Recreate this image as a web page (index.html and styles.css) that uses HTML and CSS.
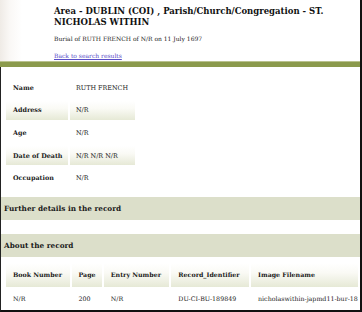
FILE: index.html
```html
<!DOCTYPE html>
<html>
<head>
<meta charset="utf-8">
<link rel="stylesheet" href="styles.css">
</head>
<body>
<div class="page">
  <header class="head">
    <h1 class="title">Area - DUBLIN (COI) , Parish/Church/Congregation - ST. NICHOLAS WITHIN</h1>
    <p class="sub">Burial of RUTH FRENCH of N/R on 11 July 1697</p>
    <a class="back" href="#">Back to search results</a>
  </header>
  <div class="bar"></div>
  <main class="content">
    <table class="details">
      <tr><th>Name</th><td>RUTH FRENCH</td></tr>
      <tr class="alt"><th>Address</th><td>N/R</td></tr>
      <tr><th>Age</th><td>N/R</td></tr>
      <tr class="alt"><th>Date of Death</th><td>N/R N/R N/R</td></tr>
      <tr><th>Occupation</th><td>N/R</td></tr>
    </table>
    <h2 class="band band-first">Further details in the record</h2>
    <h2 class="band band-second">About the record</h2>
    <table class="record">
      <tr class="rhead">
        <th class="c1">Book Number</th>
        <th class="c2">Page</th>
        <th class="c3">Entry Number</th>
        <th class="c4">Record_Identifier</th>
        <th class="c5">Image Filename</th>
      </tr>
      <tr>
        <td>N/R</td>
        <td>200</td>
        <td>N/R</td>
        <td>DU-CI-BU-189849</td>
        <td>nicholaswithin-japmd11-bur-18</td>
      </tr>
    </table>
  </main>
</div>
</body>
</html>
```

FILE: styles.css
```css
html, body {
  margin: 0;
  padding: 0;
  background: #fff;
}
body {
  font-family: "DejaVu Serif", "Liberation Serif", serif;
  color: #222;
  width: 362px;
  height: 312px;
  overflow: hidden;
}
.page {
  width: 362px;
  height: 312px;
  box-sizing: border-box;
  border-right: 2px solid #111;
  display: flex;
  flex-direction: column;
}
.head {
  height: 61px;
  box-sizing: border-box;
  padding: 6px 0 0 54px;
  background: linear-gradient(to right, #efebe6 0px, #faf8f6 10px, #fff 22px);
}
.title {
  margin: 0;
  font-size: 8.5px;
  line-height: 11px;
  font-weight: bold;
  color: #111;
  width: 290px;
}
.sub {
  margin: 6px 0 0;
  font-size: 6px;
  line-height: 9px;
  color: #222;
}
.back {
  display: inline-block;
  margin-top: 4px;
  font-size: 6px;
  line-height: 8px;
  color: #5a4ec8;
  text-decoration: underline;
}
.bar {
  height: 5px;
  background: #8b9a4c;
  border-top: 1px solid #b9c28e;
}
.content {
  flex: 1;
  border-left: 1px solid #222;
  border-bottom: 2px solid #111;
  display: flex;
  flex-direction: column;
  align-items: flex-start;
}
.details {
  margin: 8px 0 0 3px;
  border-collapse: separate;
  border-spacing: 2px 3px;
}
.details th,
.details td {
  height: 19.6px;
  padding: 0;
  font-size: 6.4px;
  text-align: left;
  vertical-align: middle;
  white-space: nowrap;
}
.details th {
  width: 55px;
  padding-left: 7px;
  font-weight: bold;
  color: #1a1a1a;
}
.details td {
  width: 59px;
  padding-left: 6px;
  color: #222;
}
.details .alt th,
.details .alt td,
.record .rhead th {
  background: linear-gradient(to bottom, #fff 0%, #fafaf5 40%, #e6e9d6 100%);
}
.band {
  align-self: stretch;
  margin: 0;
  height: 23px;
  line-height: 23px;
  padding-left: 3px;
  background: #dcdfca;
  font-size: 7.3px;
  font-weight: bold;
  color: #1a1a1a;
}
.band-first {
  margin-top: 6px;
}
.band-second {
  margin-top: 14px;
}
.record {
  margin: 4px 0 0 3px;
  border-collapse: separate;
  border-spacing: 2px;
  table-layout: fixed;
  width: 356px;
}
.record th,
.record td {
  padding: 0 0 0 7px;
  font-size: 6.3px;
  text-align: left;
  white-space: nowrap;
  overflow: hidden;
}
.record th {
  height: 24px;
  font-weight: bold;
  color: #1a1a1a;
}
.record td {
  height: 19px;
  color: #222;
}
.c1 { width: 56px; }
.c2 { width: 23px; }
.c3 { width: 58px; }
.c4 { width: 70px; }
.c5 { width: 99px; }
```
